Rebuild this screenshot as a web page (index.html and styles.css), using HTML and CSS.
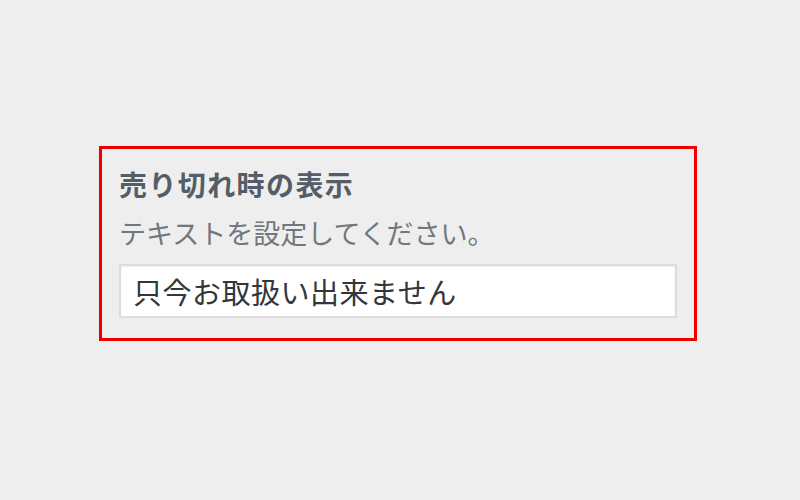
FILE: index.html
```html
<!DOCTYPE html>
<html lang="ja">
<head>
  <meta charset="UTF-8" />
  <meta name="viewport" content="width=device-width, initial-scale=1.0">
  <title>売り切れ時の表示</title>
  <link rel="stylesheet" href="styles.css">
</head>
<body>
  <div class="page">
    <div class="setting-box">
      <h3 class="setting-title">売り切れ時の表示</h3>
      <p class="setting-desc">テキストを設定してください。</p>
      <input class="setting-input" type="text" value="只今お取扱い出来ません">
    </div>
  </div>
</body>
</html>
```

FILE: styles.css
```css
:root {
  --bg-color: #eeeeee;
  --title-color: #555d66;
  --desc-color: #72777c;
  --input-text: #32373c;
  --mark-color: #ee0000;
}

body {
  margin: 0;
  background: var(--bg-color);
  font-family: "Noto Sans CJK JP", "Noto Sans", sans-serif;
}

.page {
  padding: 146px 0 0 99px;
}

.setting-box {
  box-sizing: border-box;
  width: 598px;
  height: 195px;
  border: 3px solid var(--mark-color);
  padding: 15px 17px 0;
}

.setting-title {
  margin: 0;
  font-size: 28px;
  line-height: 40px;
  font-weight: bold;
  color: var(--title-color);
  letter-spacing: 1.4px;
}

.setting-desc {
  margin: 11px 0 0;
  font-size: 27px;
  line-height: 36px;
  color: var(--desc-color);
}

.setting-input {
  box-sizing: border-box;
  display: block;
  width: 558px;
  height: 54px;
  margin-top: 13px;
  padding: 0 12px;
  border: 2px solid #dddddd;
  box-shadow: inset 0 1px 2px rgba(0, 0, 0, 0.07), 0 0 1px #e4e4e4;
  background: #ffffff;
  font-family: inherit;
  font-size: 29px;
  color: var(--input-text);
  letter-spacing: 0.5px;
}
```
